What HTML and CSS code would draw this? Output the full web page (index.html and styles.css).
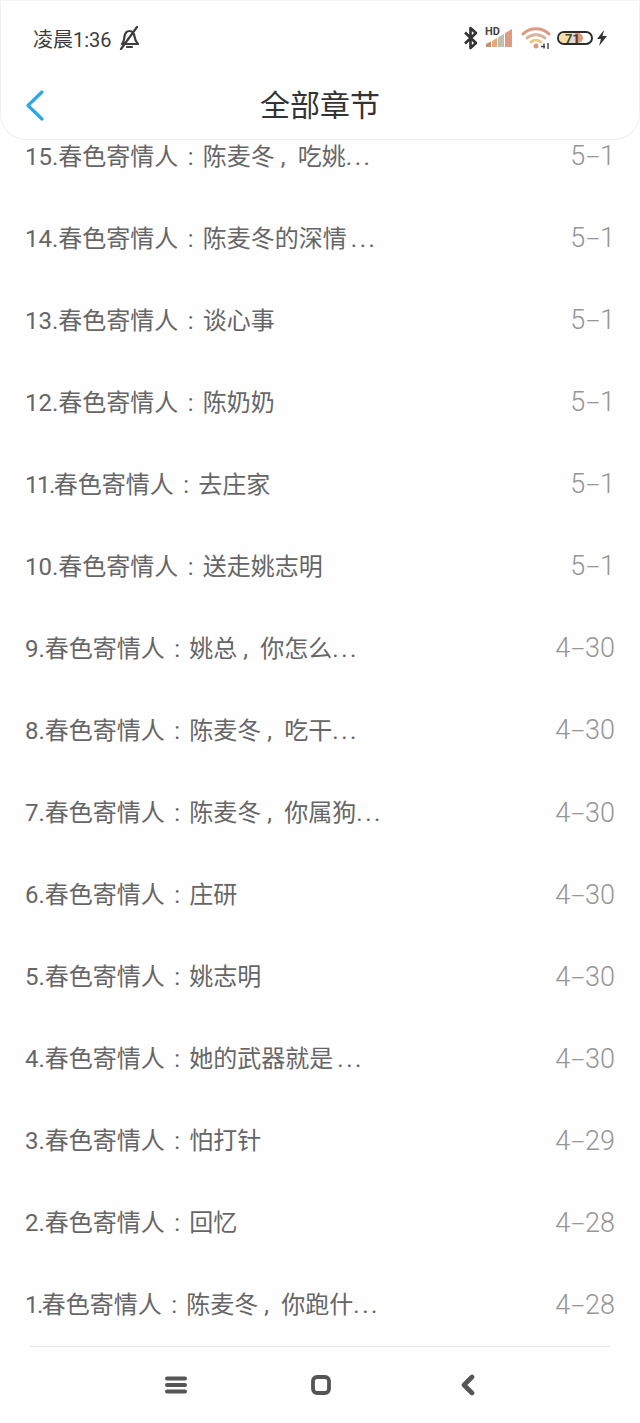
FILE: index.html
```html
<!DOCTYPE html>
<html lang="zh">
<head>
<meta charset="utf-8">
<title>全部章节</title>
<link rel="stylesheet" href="styles.css">
</head>
<body>
<header class="header">
  <div class="status">
    <div class="status-left">
      <span class="clock">凌晨1:36</span>
      <svg class="bell" viewBox="0 0 22 24" width="22" height="24"><path d="M4 18c2-2 2-4 2.500-7.500C7 7 9 5 11.500 5S16 7 16.500 10.500 18 16 20 18H4Z M9 21h5 M19 1 3 23" fill="none" stroke="#3c3c3c" stroke-width="2.200" stroke-linecap="round" stroke-linejoin="round"/></svg>
    </div>
    <div class="status-right">
      <svg class="bt" viewBox="0 0 16 24" width="16" height="24"><path d="M2 6.500 13 17l-5.500 5V2L13 7 2 17.500" fill="none" stroke="#333" stroke-width="2.600" stroke-linejoin="round"/></svg>
      <div class="signal">
        <span class="hd">HD</span>
        <svg viewBox="0 0 26 18" width="26" height="18"><path d="M0 18v-3l5-2.500V18Z" fill="#c98d72"/><path d="M6 18v-6l5-3v9Z" fill="#e2ab78"/><path d="M12 18V8.500l6-3.500v13Z" fill="#c3bdb0"/><path d="M19 18V4l7-4v18Z" fill="#dc9a80"/></svg>
      </div>
      <svg class="wifi" viewBox="0 0 30 24" width="30" height="24"><path d="M2 8c7-7 19-7 26 0" fill="none" stroke="#dc9a80" stroke-width="3" stroke-linecap="round"/><path d="M6 12c5-4.500 13-4.500 18 0" fill="none" stroke="#d8b49e" stroke-width="3" stroke-linecap="round"/><path d="M10 16c3-2.500 7-2.500 10 0" fill="none" stroke="#e8c98c" stroke-width="3" stroke-linecap="round"/><circle cx="15" cy="20" r="2.500" fill="#d79a85"/><path d="M23 17.500v5M20 20.500h4M27 17v6" fill="none" stroke="#444" stroke-width="1.400"/></svg>
      <div class="battery"><span class="level"></span><span class="pct">71</span></div>
      <svg class="bolt" viewBox="0 0 12 16" width="12" height="16"><path d="M8 0 1 9h4l-2 7 8-10H6.500Z" fill="#333"/></svg>
    </div>
  </div>
  <div class="titlebar">
    <svg class="back" viewBox="0 0 20 32" width="20" height="32"><path d="M18 3 4 16.500 18 30" fill="none" stroke="#2ea6ea" stroke-width="3.200" stroke-linecap="round" stroke-linejoin="round"/></svg>
    <h1 class="title">全部章节</h1>
  </div>
</header>

<main class="list">
  <div class="row"><span class="name">15.春色寄情人<span class="colon">:</span>陈麦冬<span class="comma">,</span>吃姚<span class="more">...</span></span><span class="date">5<span class="dash">-</span>1</span></div>
  <div class="row"><span class="name">14.春色寄情人<span class="colon">:</span>陈麦冬的深情<span class="more">...</span></span><span class="date">5<span class="dash">-</span>1</span></div>
  <div class="row"><span class="name">13.春色寄情人<span class="colon">:</span>谈心事</span><span class="date">5<span class="dash">-</span>1</span></div>
  <div class="row"><span class="name">12.春色寄情人<span class="colon">:</span>陈奶奶</span><span class="date">5<span class="dash">-</span>1</span></div>
  <div class="row"><span class="name"><span class="narrow">11.</span>春色寄情人<span class="colon">:</span>去庄家</span><span class="date">5<span class="dash">-</span>1</span></div>
  <div class="row"><span class="name">10.春色寄情人<span class="colon">:</span>送走姚志明</span><span class="date">5<span class="dash">-</span>1</span></div>
  <div class="row"><span class="name">9.春色寄情人<span class="colon">:</span>姚总<span class="comma">,</span>你怎么<span class="more">...</span></span><span class="date">4<span class="dash">-</span>30</span></div>
  <div class="row"><span class="name">8.春色寄情人<span class="colon">:</span>陈麦冬<span class="comma">,</span>吃干<span class="more">...</span></span><span class="date">4<span class="dash">-</span>30</span></div>
  <div class="row"><span class="name">7.春色寄情人<span class="colon">:</span>陈麦冬<span class="comma">,</span>你属狗<span class="more">...</span></span><span class="date">4<span class="dash">-</span>30</span></div>
  <div class="row"><span class="name">6.春色寄情人<span class="colon">:</span>庄研</span><span class="date">4<span class="dash">-</span>30</span></div>
  <div class="row"><span class="name">5.春色寄情人<span class="colon">:</span>姚志明</span><span class="date">4<span class="dash">-</span>30</span></div>
  <div class="row"><span class="name">4.春色寄情人<span class="colon">:</span>她的武器就是<span class="more">...</span></span><span class="date">4<span class="dash">-</span>30</span></div>
  <div class="row"><span class="name">3.春色寄情人<span class="colon">:</span>怕打针</span><span class="date">4<span class="dash">-</span>29</span></div>
  <div class="row"><span class="name">2.春色寄情人<span class="colon">:</span>回忆</span><span class="date">4<span class="dash">-</span>28</span></div>
  <div class="row"><span class="name"><span class="narrow">1.</span>春色寄情人<span class="colon">:</span>陈麦冬<span class="comma">,</span>你跑什<span class="more">...</span></span><span class="date">4<span class="dash">-</span>28</span></div>
</main>

<footer class="navbar">
  <svg viewBox="0 0 22 20" width="22" height="20"><path d="M2 3.500h18M2 10h18M2 16.500h18" fill="none" stroke="#555" stroke-width="4" stroke-linecap="round"/></svg>
  <svg viewBox="0 0 22 22" width="22" height="22"><rect x="3" y="3" width="16" height="16" rx="4" fill="none" stroke="#555" stroke-width="3.800"/></svg>
  <svg viewBox="0 0 16 22" width="16" height="22"><path d="M12 3 4 11l8 8" fill="none" stroke="#555" stroke-width="4.600" stroke-linecap="round" stroke-linejoin="round"/></svg>
</footer>
</body>
</html>
```
FILE: styles.css
```css
* { box-sizing: border-box; }

html, body {
  margin: 0;
  padding: 0;
}

body {
  width: 640px;
  height: 1423px;
  overflow: hidden;
  background: #fefefe;
  font-family: Roboto, "Noto Sans CJK SC", sans-serif;
  display: flex;
  flex-direction: column;
}

.header {
  position: relative;
  z-index: 2;
  height: 140px;
  flex: none;
  background: #fff;
  border: 1px solid #f0f0f0;
  border-top-color: #f6f6f6;
  border-radius: 0 0 26px 26px;
  display: flex;
  flex-direction: column;
}

.status {
  height: 74px;
  padding: 0 31px 0 32px;
  display: flex;
  align-items: center;
  justify-content: space-between;
}

.status-left, .status-right {
  display: flex;
  align-items: center;
}

.clock {
  font-size: 20px;
  color: #3c3c3c;
}

.bell { margin-left: 6px; }

.status-right { gap: 3px; }

.signal {
  position: relative;
  width: 26px;
  height: 18px;
  margin: 0 6px 0 4px;
  display: flex;
}

.hd {
  position: absolute;
  left: -1px;
  top: -2px;
  font-size: 11px;
  font-weight: 700;
  color: #444;
  line-height: 10px;
}

.battery {
  position: relative;
  width: 36px;
  height: 14px;
  margin-left: 3px;
  border: 2px solid #2c2c2c;
  border-radius: 8px;
  overflow: hidden;
  display: flex;
  align-items: center;
  justify-content: center;
  background: #fff;
}

.level {
  position: absolute;
  left: 0;
  top: 0;
  bottom: 0;
  width: 24px;
  border-radius: 0 6px 6px 0;
  background: linear-gradient(90deg, #f4dfa6 0 40%, #dedad0 40% 68%, #e49878 68%);
}

.pct {
  position: relative;
  font-size: 13px;
  font-weight: 700;
  line-height: 13px;
  color: #4a4130;
  margin-right: 5px;
}

.titlebar {
  position: relative;
  flex: 1;
  display: flex;
  align-items: center;
  justify-content: center;
  padding-bottom: 2px;
}

.back {
  position: absolute;
  left: 23px;
  top: 14px;
}

.title {
  margin: 0;
  font-size: 30px;
  font-weight: 400;
  line-height: 40px;
  color: #333;
}

.list {
  margin-top: -25px;
  flex: none;
  display: flex;
  flex-direction: column;
}

.row {
  height: 82.07px;
  padding: 0 25px;
  display: flex;
  align-items: center;
  justify-content: space-between;
}

.name {
  font-size: 24px;
  color: #666;
  white-space: nowrap;
  margin-bottom: 4px;
}

.narrow { letter-spacing: -1.500px; }

.colon {
  display: inline-block;
  width: 24.500px;
  text-align: center;
}

.comma {
  display: inline-block;
  width: 23px;
  padding-left: 6px;
}

.more {
  letter-spacing: 2.500px;
  margin-left: 4px;
}

.comma ~ .more { margin-left: 0; }

.date {
  font-size: 27px;
  font-weight: 300;
  color: #969696;
}

.dash {
  display: inline-block;
  margin: 0 3.500px;
  transform: scaleX(1.800);
}

.navbar {
  margin: 0 30px;
  flex: 1;
  border-top: 1px solid #e9e9e9;
  display: flex;
  align-items: center;
}

.navbar svg:nth-child(1) { margin-left: 135px; }
.navbar svg:nth-child(2) { margin-left: 123px; }
.navbar svg:nth-child(3) { margin-left: 128px; }
```
